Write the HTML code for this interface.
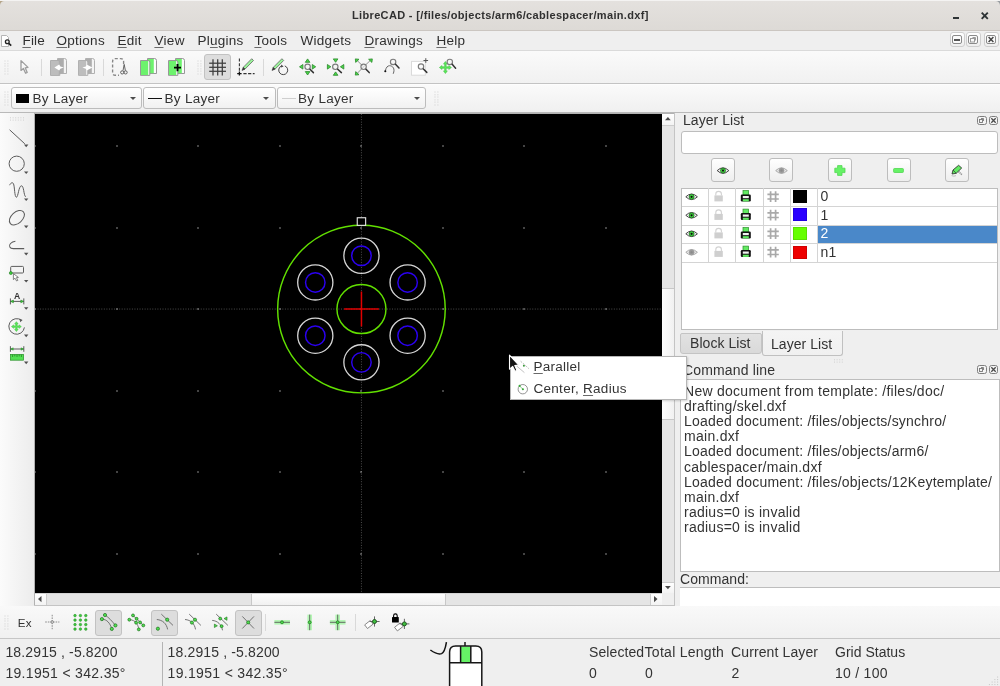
<!DOCTYPE html><html><head><meta charset="utf-8"><title>LibreCAD</title>
<style>
*{margin:0;padding:0;box-sizing:border-box}
html,body{width:1000px;height:686px;overflow:hidden;background:#efefef;font-family:"Liberation Sans",sans-serif;color:#232323;font-size:14.6px}
#root{position:absolute;left:0;top:0;width:1000px;height:686px;overflow:hidden;will-change:transform;background:#efefef}
.a{position:absolute}
.t{position:absolute;white-space:nowrap;line-height:1;font-size:14.6px;color:#333}
.m{font-size:14.1px;color:#2f2f2f}
.c{font-size:14.1px}
u{text-decoration:underline;text-underline-offset:2px;text-decoration-thickness:1px;text-decoration-color:#6a6a6a}
svg{position:absolute;overflow:visible}
#title{left:0;top:0;width:1000px;height:31px;background:linear-gradient(#e4e1de,#dddad6);border-top:1px solid #f4f3f2;border-bottom:1px solid #cbc6c1}
#menubar{left:0;top:31px;width:1000px;height:19px;background:#efefef}
#tb1{left:0;top:50px;width:1000px;height:34px;background:linear-gradient(#fafafa,#f1f1f1);border-top:1px solid #dadada;border-bottom:1px solid #c3c3c3}
#tb2{left:0;top:84px;width:1000px;height:29px;background:linear-gradient(#fafafa,#f0f0f0);border-top:1px solid #fdfdfd;border-bottom:1px solid #b9b9b9}
#ltb{left:0;top:113px;width:34px;height:493px;background:linear-gradient(90deg,#fbfbfb,#ececec)}
#canvas{left:35px;top:114px;width:626.5px;height:479px;background:#000;overflow:hidden}
.hd{position:absolute;background-image:radial-gradient(circle,#bdbdbd 0.55px,transparent 0.85px);background-size:2px 2px}
.combo{position:absolute;top:87px;height:22px;border:1px solid #bcbcbc;border-radius:3px;background:linear-gradient(#ffffff,#f1f1f1)}
.sep{position:absolute;width:1px;background:#d9d9d9}
.pressed{position:absolute;background:#dddddd;border:1px solid #c2c2c2;border-radius:3px}
.btn{position:absolute;border:1px solid #bdbdbd;border-radius:3px;background:linear-gradient(#ffffff,#eeeeee)}
</style></head><body>
<div id="root">
<div id="title" class="a"><span class="t" style="left:352px;top:9.2px;font-weight:bold;font-size:11px;letter-spacing:.34px;color:#303030" id="ttl">LibreCAD - [/files/objects/arm6/cablespacer/main.dxf]</span><div class="a" style="left:952.8px;top:16px;width:6.4px;height:2.2px;background:#2e3436"></div><svg style="left:981px;top:11px" width="8" height="8"><path d="M0.7 0.7 L6.8 6.8 M6.8 0.7 L0.7 6.8" stroke="#2e3436" stroke-width="1.9" fill="none"></path></svg><svg style="left:0;top:0" width="1000" height="6"><path d="M0 0 H4.5 A4.5 4.5 0 0 0 0 4.5 Z" fill="#b5a58a"></path><path d="M1000 0 H995.5 A4.5 4.5 0 0 1 1000 4.5 Z" fill="#9a9ea2"></path></svg></div>
<div id="menubar" class="a"><svg style="left:0.2px;top:4px" width="13" height="13"><path d="M1.5 0.5 H6.5 L8.5 2.5 V11.5 H1.5 Z" fill="#fff" stroke="#b5b5b5" stroke-width="1"></path><circle cx="7.3" cy="6.8" r="1.9" fill="#eee" stroke="#222" stroke-width="1.3"></circle><path d="M8.8 8.3 L11.2 10.6" stroke="#222" stroke-width="1.7"></path></svg><span class="t m" id="m_File" style="left: 22.4px; top: 3px; font-size: 13.52px; letter-spacing: 0.23px;"><u>F</u>ile</span><span class="t m" id="m_Options" style="left: 56.4px; top: 3px; font-size: 13.52px; letter-spacing: 0.283px;"><u>O</u>ptions</span><span class="t m" id="m_Edit" style="left: 117.4px; top: 3px; font-size: 13.52px; letter-spacing: 0.25px;"><u>E</u>dit</span><span class="t m" id="m_View" style="left: 154.4px; top: 3px; font-size: 13.52px; letter-spacing: 0.313px;"><u>V</u>iew</span><span class="t m" id="m_Plugins" style="left: 197.4px; top: 3px; font-size: 13.52px; letter-spacing: 0.27px;">Pl<u>u</u>gins</span><span class="t m" id="m_Tools" style="left: 254.4px; top: 3px; font-size: 13.52px; letter-spacing: 0.269px;"><u>T</u>ools</span><span class="t m" id="m_Widgets" style="left: 300.4px; top: 3px; font-size: 13.52px; letter-spacing: 0.299px;"><u></u>Widgets</span><span class="t m" id="m_Drawings" style="left: 364.4px; top: 3px; font-size: 13.52px; letter-spacing: 0.303px;"><u>D</u>rawings</span><span class="t m" id="m_Help" style="left: 436.4px; top: 3px; font-size: 13.52px; letter-spacing: 0.297px;"><u>H</u>elp</span><div class="btn" style="left:949.5px;top:1px;width:15px;height:15px;border-color:#cfcfcf"></div><div class="a" style="left:952px;top:4px;width:10px;height:9px;border:1px solid #8a8a8a;border-radius:2px;background:#fbfbfb"></div><div class="btn" style="left:965.5px;top:1px;width:15px;height:15px;border-color:#cfcfcf"></div><div class="a" style="left:968px;top:4px;width:10px;height:9px;border:1px solid #8a8a8a;border-radius:2px;background:#fbfbfb"></div><div class="btn" style="left:983.5px;top:1px;width:15px;height:15px;border-color:#cfcfcf"></div><div class="a" style="left:986px;top:4px;width:10px;height:9px;border:1px solid #8a8a8a;border-radius:2px;background:#fbfbfb"></div><div class="a" style="left:954px;top:8px;width:6px;height:2px;background:#555"></div><svg style="left:968px;top:4px" width="10" height="9"><rect x="2.5" y="3.5" width="4" height="3.5" fill="none" stroke="#9a9a9a"></rect><path d="M4.5 2.5 H7.5 V5.5" fill="none" stroke="#9a9a9a"></path></svg><svg style="left:986px;top:4px" width="10" height="9"><path d="M2.6 2 L7.4 7 M7.4 2 L2.6 7" stroke="#444" stroke-width="1.5"></path></svg></div>
<div id="tb1" class="a"></div>
<div id="tb2" class="a"></div>
<svg style="left:4px;top:60px" width="4" height="14"><rect x="0.5" y="0.5" width="1" height="1" fill="#cfcfcf"></rect><rect x="3.4" y="0.5" width="1" height="1" fill="#cfcfcf"></rect><rect x="0.5" y="3.3" width="1" height="1" fill="#cfcfcf"></rect><rect x="3.4" y="3.3" width="1" height="1" fill="#cfcfcf"></rect><rect x="0.5" y="5.5" width="1" height="1" fill="#cfcfcf"></rect><rect x="3.4" y="5.5" width="1" height="1" fill="#cfcfcf"></rect><rect x="0.5" y="8.4" width="1" height="1" fill="#cfcfcf"></rect><rect x="3.4" y="8.4" width="1" height="1" fill="#cfcfcf"></rect><rect x="0.5" y="10.6" width="1" height="1" fill="#cfcfcf"></rect><rect x="3.4" y="10.6" width="1" height="1" fill="#cfcfcf"></rect><rect x="0.5" y="13.5" width="1" height="1" fill="#cfcfcf"></rect><rect x="3.4" y="13.5" width="1" height="1" fill="#cfcfcf"></rect></svg><svg style="left:197px;top:60px" width="4" height="14"><rect x="0.5" y="0.5" width="1" height="1" fill="#cfcfcf"></rect><rect x="3.4" y="0.5" width="1" height="1" fill="#cfcfcf"></rect><rect x="0.5" y="3.3" width="1" height="1" fill="#cfcfcf"></rect><rect x="3.4" y="3.3" width="1" height="1" fill="#cfcfcf"></rect><rect x="0.5" y="5.5" width="1" height="1" fill="#cfcfcf"></rect><rect x="3.4" y="5.5" width="1" height="1" fill="#cfcfcf"></rect><rect x="0.5" y="8.4" width="1" height="1" fill="#cfcfcf"></rect><rect x="3.4" y="8.4" width="1" height="1" fill="#cfcfcf"></rect><rect x="0.5" y="10.6" width="1" height="1" fill="#cfcfcf"></rect><rect x="3.4" y="10.6" width="1" height="1" fill="#cfcfcf"></rect><rect x="0.5" y="13.5" width="1" height="1" fill="#cfcfcf"></rect><rect x="3.4" y="13.5" width="1" height="1" fill="#cfcfcf"></rect></svg><svg style="left:4px;top:91px" width="4" height="14"><rect x="0.5" y="0.5" width="1" height="1" fill="#cfcfcf"></rect><rect x="3.4" y="0.5" width="1" height="1" fill="#cfcfcf"></rect><rect x="0.5" y="3.3" width="1" height="1" fill="#cfcfcf"></rect><rect x="3.4" y="3.3" width="1" height="1" fill="#cfcfcf"></rect><rect x="0.5" y="5.5" width="1" height="1" fill="#cfcfcf"></rect><rect x="3.4" y="5.5" width="1" height="1" fill="#cfcfcf"></rect><rect x="0.5" y="8.4" width="1" height="1" fill="#cfcfcf"></rect><rect x="3.4" y="8.4" width="1" height="1" fill="#cfcfcf"></rect><rect x="0.5" y="10.6" width="1" height="1" fill="#cfcfcf"></rect><rect x="3.4" y="10.6" width="1" height="1" fill="#cfcfcf"></rect><rect x="0.5" y="13.5" width="1" height="1" fill="#cfcfcf"></rect><rect x="3.4" y="13.5" width="1" height="1" fill="#cfcfcf"></rect></svg><svg style="left:434px;top:91px" width="4" height="14"><rect x="0.5" y="0.5" width="1" height="1" fill="#cfcfcf"></rect><rect x="3.4" y="0.5" width="1" height="1" fill="#cfcfcf"></rect><rect x="0.5" y="3.3" width="1" height="1" fill="#cfcfcf"></rect><rect x="3.4" y="3.3" width="1" height="1" fill="#cfcfcf"></rect><rect x="0.5" y="5.5" width="1" height="1" fill="#cfcfcf"></rect><rect x="3.4" y="5.5" width="1" height="1" fill="#cfcfcf"></rect><rect x="0.5" y="8.4" width="1" height="1" fill="#cfcfcf"></rect><rect x="3.4" y="8.4" width="1" height="1" fill="#cfcfcf"></rect><rect x="0.5" y="10.6" width="1" height="1" fill="#cfcfcf"></rect><rect x="3.4" y="10.6" width="1" height="1" fill="#cfcfcf"></rect><rect x="0.5" y="13.5" width="1" height="1" fill="#cfcfcf"></rect><rect x="3.4" y="13.5" width="1" height="1" fill="#cfcfcf"></rect></svg><div class="sep" style="left:41px;top:59px;height:17px"></div><div class="sep" style="left:103px;top:59px;height:17px"></div><div class="sep" style="left:263px;top:59px;height:17px"></div><div class="pressed" style="left:204px;top:54px;width:27px;height:26px"></div><svg style="left:0;top:0" width="1000" height="120"><path d="M21 60.6 V70.4 L23.4 68.4 L25.6 73.2 L27.2 72.4 L25.2 67.8 L28 67.4 Z" fill="#f8f8f8" stroke="#9d9d9d" stroke-width="1.3" stroke-linejoin="round"></path><path d="M57.5 58.5 H64.5 Q66.5 58.5 66.5 60.5 V73.5 H57.5 Z" fill="#f4f4f4" stroke="#a9a9a9" stroke-width=".9"></path><rect x="58" y="59" width="5.8" height="14.2" fill="#adadad"></rect><path d="M50.5 60.5 H58 Q59.8 60.5 59.8 62 V75.4 H50.5 Z" fill="#b9b9b9" stroke="#a9a9a9" stroke-width=".9"></path><rect x="51" y="61" width="7.2" height="14" fill="#bdbdbd"></rect><path d="M54.4 67.6 L57.6 65.6 L59.2 64.6 L60.4 66.4 L63.8 67.6 L60.4 68.8 L59.2 70.6 L57.6 69.6 Z" fill="#fff"></path><path d="M85.5 58.5 H92.5 Q94.5 58.5 94.5 60.5 V73.5 H85.5 Z" fill="#f4f4f4" stroke="#a9a9a9" stroke-width=".9"></path><rect x="86" y="59" width="5.8" height="14.2" fill="#adadad"></rect><path d="M78.5 60.5 H86 Q87.8 60.5 87.8 62 V75.4 H78.5 Z" fill="#f4f4f4" stroke="#a9a9a9" stroke-width=".9"></path><rect x="79" y="61" width="7.2" height="14" fill="#bdbdbd"></rect><path d="M82.4 67.6 L85.8 66.4 L87 64.8 L88.6 65.6 L92.4 67.6 L88.6 69.6 L87 70.4 L85.8 68.8 Z" fill="#fff"></path><path d="M123.6 64 V61.5 Q123.6 58.6 120.8 58.6 H115.2 Q112.6 58.6 112.6 61.5 V72.6 Q112.6 75.2 115.2 75.2 H119" fill="none" stroke="#868686" stroke-width="1.35" stroke-dasharray="3 2"></path><path d="M124.2 64.4 L123 70.6 M124.2 64.4 L125.4 70.6" stroke="#555" stroke-width=".9"></path><circle cx="122.2" cy="72.4" r="1.6" fill="none" stroke="#555" stroke-width=".9"></circle><circle cx="125.6" cy="72.4" r="1.6" fill="none" stroke="#555" stroke-width=".9"></circle><path d="M147.5 58.5 H154.5 Q156.5 58.5 156.5 60.5 V73.5 H147.5 Z" fill="#fbfbfb" stroke="#8c8c8c" stroke-width=".9"></path><rect x="148" y="59" width="5.8" height="14.2" fill="#6df26d"></rect><path d="M140.5 60.5 H148 Q149.8 60.5 149.8 62 V75.4 H140.5 Z" fill="#fbfbfb" stroke="#8c8c8c" stroke-width=".9"></path><rect x="141" y="61" width="7.2" height="14" fill="#6df26d"></rect><path d="M175.5 58.5 H182.5 Q184.5 58.5 184.5 60.5 V73.5 H175.5 Z" fill="#fbfbfb" stroke="#8c8c8c" stroke-width=".9"></path><rect x="176" y="59" width="5.8" height="14.2" fill="#6df26d"></rect><path d="M168.5 60.5 H176 Q177.8 60.5 177.8 62 V75.4 H168.5 Z" fill="#fbfbfb" stroke="#8c8c8c" stroke-width=".9"></path><rect x="169" y="61" width="7.2" height="14" fill="#6df26d"></rect><path d="M174 67.6 H181 M177.5 64 V71.2" stroke="#000" stroke-width="1.9"></path><path d="M213 59.2 V75.6" stroke="#3e3e3e" stroke-width="1.25"></path><path d="M217.7 59.2 V75.6" stroke="#3e3e3e" stroke-width="1.25"></path><path d="M222.3 59.2 V75.6" stroke="#3e3e3e" stroke-width="1.25"></path><path d="M209.2 63.2 H226" stroke="#3e3e3e" stroke-width="1.25"></path><path d="M209.2 67.3 H226" stroke="#3e3e3e" stroke-width="1.25"></path><path d="M209.2 71.3 H226" stroke="#3e3e3e" stroke-width="1.25"></path><path d="M239.4 58.6 V71" stroke="#333" stroke-width="1.1" stroke-dasharray="3 1.6"></path><path d="M243.4 73.6 H254.6" stroke="#333" stroke-width="1.1" stroke-dasharray="3.2 1.5"></path><path d="M237.2 73.6 H241.6 M239.4 71.6 V75.6" stroke="#111" stroke-width="1.3"></path><path d="M244.994 69.1345 L253.492 60.4756 L251.708 58.7244 L243.209 67.3834 Z" fill="#9af59a" stroke="#5c5c5c" stroke-width=".75" stroke-linejoin="round"></path><path d="M242 70.4 L244.994 69.1345 L243.209 67.3834 Z" fill="#333" stroke="#333" stroke-width=".6"></path><path d="M275.005 69.1626 L283.684 60.4839 L281.916 58.7161 L273.237 67.3948 Z" fill="#9af59a" stroke="#5c5c5c" stroke-width=".75" stroke-linejoin="round"></path><path d="M272 70.4 L275.005 69.1626 L273.237 67.3948 Z" fill="#333" stroke="#333" stroke-width=".6"></path><path d="M281.4 66 A4.5 4.5 0 1 0 284.8 65.9" fill="none" stroke="#444" stroke-width="1"></path><path d="M281.2 64.4 L281 67.4 L283.6 66.4 Z" fill="#444"></path><polygon points="307.6,58.9 305.3,62.3 309.9,62.3" fill="#48d848" stroke="#2b862b" stroke-width=".8" stroke-linejoin="round"></polygon><polygon points="307.6,75 305.3,71.6 309.9,71.6" fill="#48d848" stroke="#2b862b" stroke-width=".8" stroke-linejoin="round"></polygon><polygon points="299.5,66.8 302.9,64.5 302.9,69.1" fill="#48d848" stroke="#2b862b" stroke-width=".8" stroke-linejoin="round"></polygon><polygon points="315.7,66.8 312.3,64.5 312.3,69.1" fill="#48d848" stroke="#2b862b" stroke-width=".8" stroke-linejoin="round"></polygon><circle cx="307.6" cy="66.8" r="2.7" fill="#f6f6f6" fill-opacity=".6" stroke="#7c7c7c" stroke-width="1.15"></circle><path d="M310.009 69.2092 L313.4 72.6" stroke="#333" stroke-width="1.5" stroke-linecap="round"></path><polygon points="335.6,62.3 333.3,58.9 337.9,58.9" fill="#48d848" stroke="#2b862b" stroke-width=".8" stroke-linejoin="round"></polygon><polygon points="335.6,71.9 333.3,75.3 337.9,75.3" fill="#48d848" stroke="#2b862b" stroke-width=".8" stroke-linejoin="round"></polygon><polygon points="330.8,66.8 327.4,64.5 327.4,69.1" fill="#48d848" stroke="#2b862b" stroke-width=".8" stroke-linejoin="round"></polygon><polygon points="340.4,66.8 343.8,64.5 343.8,69.1" fill="#48d848" stroke="#2b862b" stroke-width=".8" stroke-linejoin="round"></polygon><circle cx="335.3" cy="66.8" r="2.7" fill="#f6f6f6" fill-opacity=".6" stroke="#7c7c7c" stroke-width="1.15"></circle><path d="M337.709 69.2092 L341.4 72.6" stroke="#333" stroke-width="1.5" stroke-linecap="round"></path><path d="M357 60.4 L363.6 66.8 L370.4 60.4 M357 73.6 L363.6 66.8" stroke="#777" stroke-width=".8" fill="none"></path><polygon points="355.3,58.9 359,59.3 355.7,62.4" fill="#48d848" stroke="#2b862b" stroke-width=".8" stroke-linejoin="round"></polygon><polygon points="372.3,58.9 368.6,59.3 371.9,62.4" fill="#48d848" stroke="#2b862b" stroke-width=".8" stroke-linejoin="round"></polygon><polygon points="355.3,75.1 359,74.7 355.7,71.6" fill="#48d848" stroke="#2b862b" stroke-width=".8" stroke-linejoin="round"></polygon><circle cx="363.6" cy="66.8" r="2.7" fill="#f6f6f6" fill-opacity=".6" stroke="#7c7c7c" stroke-width="1.15"></circle><path d="M366.009 69.2092 L369.2 72.6" stroke="#333" stroke-width="1.5" stroke-linecap="round"></path><path d="M385.4 70.8 C386 67.4 387.6 65.7 389.6 65.7 C392.6 65.7 395.4 68.6 393.2 73.8" fill="none" stroke="#666" stroke-width="1"></path><circle cx="385.3" cy="71.2" r="1.05" fill="#111"></circle><circle cx="393.1" cy="61.9" r="2.7" fill="#f6f6f6" fill-opacity=".6" stroke="#7c7c7c" stroke-width="1.15"></circle><path d="M395.509 64.3092 L399 67.9" stroke="#333" stroke-width="1.5" stroke-linecap="round"></path><rect x="411.5" y="61.4" width="13.8" height="13.8" fill="#fff" stroke="#dadada" stroke-width="1"></rect><circle cx="421" cy="66.6" r="2.7" fill="#f6f6f6" fill-opacity=".6" stroke="#7c7c7c" stroke-width="1.15"></circle><path d="M423.409 69.0092 L426.8 72.4" stroke="#333" stroke-width="1.5" stroke-linecap="round"></path><path d="M423.5 60.5 H428.1 M425.8 58.2 V62.8" stroke="#555" stroke-width="1"></path><polygon points="445.40,61.50 447.30,64.10 446.15,64.10 446.15,66.75 448.80,66.75 448.80,65.60 451.40,67.50 448.80,69.40 448.80,68.25 446.15,68.25 446.15,70.90 447.30,70.90 445.40,73.50 443.50,70.90 444.65,70.90 444.65,68.25 442.00,68.25 442.00,69.40 439.40,67.50 442.00,65.60 442.00,66.75 444.65,66.75 444.65,64.10 443.50,64.10" fill="#5aea5a" stroke="#44c244" stroke-width=".6" stroke-linejoin="round"></polygon><circle cx="449.8" cy="61.9" r="2.7" fill="#f6f6f6" fill-opacity=".6" stroke="#7c7c7c" stroke-width="1.15"></circle><path d="M452.209 64.3092 L455.6 68.2" stroke="#333" stroke-width="1.5" stroke-linecap="round"></path></svg>
<div class="combo" style="left:11px;width:131px"></div><div class="combo" style="left:143px;width:133px"></div><div class="combo" style="left:277px;width:149px"></div><div class="a" style="left:16.2px;top:93.7px;width:13.2px;height:9.2px;background:#000"></div><div class="a" style="left:148px;top:97.5px;width:14px;height:1.2px;background:#111"></div><div class="a" style="left:282px;top:97.5px;width:14px;height:1px;background:#cfcfcf"></div><span class="t c" id="c1" style="left: 32.5px; top: 92px; font-size: 13.52px; letter-spacing: 0.285px;">By Layer</span><span class="t c" id="c2" style="left: 164.5px; top: 92px; font-size: 13.52px; letter-spacing: 0.285px;">By Layer</span><span class="t c" id="c3" style="left: 298px; top: 92px; font-size: 13.52px; letter-spacing: 0.285px;">By Layer</span><svg style="left:129.6px;top:96.7px" width="6" height="4"><path d="M0 0 H6 L3 3.1 Z" fill="#4c4c4c"></path></svg><svg style="left:263.4px;top:96.7px" width="6" height="4"><path d="M0 0 H6 L3 3.1 Z" fill="#4c4c4c"></path></svg><svg style="left:413.6px;top:96.7px" width="6" height="4"><path d="M0 0 H6 L3 3.1 Z" fill="#4c4c4c"></path></svg>
<div id="ltb" class="a"></div><svg style="left:10px;top:117px" width="15" height="4"><rect x="0" y="0.3" width="1" height="1" fill="#cfcfcf"></rect><rect x="0" y="2.6" width="1" height="1" fill="#cfcfcf"></rect><rect x="2.6" y="0.3" width="1" height="1" fill="#cfcfcf"></rect><rect x="2.6" y="2.6" width="1" height="1" fill="#cfcfcf"></rect><rect x="5.2" y="0.3" width="1" height="1" fill="#cfcfcf"></rect><rect x="5.2" y="2.6" width="1" height="1" fill="#cfcfcf"></rect><rect x="7.8" y="0.3" width="1" height="1" fill="#cfcfcf"></rect><rect x="7.8" y="2.6" width="1" height="1" fill="#cfcfcf"></rect><rect x="10.4" y="0.3" width="1" height="1" fill="#cfcfcf"></rect><rect x="10.4" y="2.6" width="1" height="1" fill="#cfcfcf"></rect><rect x="13" y="0.3" width="1" height="1" fill="#cfcfcf"></rect><rect x="13" y="2.6" width="1" height="1" fill="#cfcfcf"></rect></svg><svg style="left:0;top:0" width="40" height="400"><path d="M9.6 129.8 L24.8 143.8" stroke="#5c5c5c" stroke-width="1"></path><path d="M24 144.6 H28.4 L26.2 147.2 Z" fill="#505050"></path><circle cx="16.7" cy="163.7" r="7.6" fill="none" stroke="#5c5c5c" stroke-width="1"></circle><path d="M24 171.4 H28.4 L26.2 174 Z" fill="#505050"></path><path d="M9.6 185.2 C10.6 183 12.4 181.8 13.4 183.6 C14.8 186.4 14.4 197 16.4 197.2 C18.2 197.4 18.6 186 21.4 185.8 C24 185.8 23.6 195 25.6 196.8" fill="none" stroke="#5c5c5c" stroke-width="1"></path><path d="M24 198.4 H28.4 L26.2 201 Z" fill="#505050"></path><ellipse cx="16.9" cy="217.7" rx="8.8" ry="5.6" transform="rotate(-42 16.9 217.7)" fill="none" stroke="#5c5c5c" stroke-width="1"></ellipse><path d="M24 225.6 H28.4 L26.2 228.2 Z" fill="#505050"></path><path d="M15.4 241.2 C11 241.6 8.6 245 9.8 247 C10.4 248.2 11.6 248.6 13.4 248.6 H24.2" fill="none" stroke="#5c5c5c" stroke-width="1.05"></path><path d="M24 252.8 H28.4 L26.2 255.4 Z" fill="#505050"></path><rect x="10.7" y="266.4" width="12.8" height="6.6" rx="1" fill="#f4f4f4" stroke="#5c5c5c" stroke-width="1"></rect><circle cx="10.8" cy="273" r="1.5" fill="#3ecf3e" stroke="#1e7a1e" stroke-width=".6"></circle><path d="M13.4 273.6 V279.6 L15 278.2 L16.6 281 L17.8 280.4 L16.4 277.6 L18.4 277.4 Z" fill="#fff" stroke="#666" stroke-width=".8" stroke-linejoin="round"></path><path d="M24 280 H28.4 L26.2 282.6 Z" fill="#505050"></path><path d="M10.4 298.4 V304.4 M23.8 298.4 V304.4 M10.4 301.4 H23.8" stroke="#5c5c5c" stroke-width="1"></path><path d="M10.6 301.4 L13.4 300 V302.8 Z M23.6 301.4 L20.8 300 V302.8 Z" fill="#3ecf3e" stroke="#1e7a1e" stroke-width=".5"></path><text x="17.1" y="298.6" font-family="Liberation Sans" font-weight="bold" font-size="8.6" text-anchor="middle" fill="#333">A</text><path d="M24 307.2 H28.4 L26.2 309.8 Z" fill="#505050"></path><path d="M21.6 320.4 A7.8 7.8 0 1 0 24.4 327.4" fill="none" stroke="#5c5c5c" stroke-width="1"></path><path d="M19.4 318.6 L22.6 320 L20.2 322.2 Z" fill="#5c5c5c"></path><polygon points="16.40,321.70 18.10,323.90 17.10,323.90 17.10,325.90 19.10,325.90 19.10,324.90 21.30,326.60 19.10,328.30 19.10,327.30 17.10,327.30 17.10,329.30 18.10,329.30 16.40,331.50 14.70,329.30 15.70,329.30 15.70,327.30 13.70,327.30 13.70,328.30 11.50,326.60 13.70,324.90 13.70,325.90 15.70,325.90 15.70,323.90 14.70,323.90" fill="#5aea5a" stroke="#44c244" stroke-width=".6" stroke-linejoin="round"></polygon><path d="M24 334.6 H28.4 L26.2 337.2 Z" fill="#505050"></path><path d="M10.4 346.2 V351.8 M23.8 346.2 V351.8 M10.4 349 H23.8" stroke="#5c5c5c" stroke-width="1"></path><path d="M10.6 349 L13.2 347.8 V350.2 Z M23.6 349 L21 347.8 V350.2 Z" fill="#3ecf3e" stroke="#1e7a1e" stroke-width=".4"></path><rect x="10.4" y="354.4" width="13.2" height="5.8" fill="#52e052" stroke="#2a8f2a" stroke-width=".7"></rect><path d="M12.6 354.6 V357 M14.8 354.6 V356.4 M17 354.6 V357 M19.2 354.6 V356.4 M21.4 354.6 V357" stroke="#1e7a1e" stroke-width=".7"></path><path d="M24 361.6 H28.4 L26.2 364.2 Z" fill="#505050"></path></svg>
<div id="canvas" class="a"><svg style="left:0;top:0" width="627" height="479"><path d="M0 195.05 H627" stroke="#4c4c4c" stroke-width="1" stroke-dasharray="1 1.55"></path><path d="M326.45 0 V479" stroke="#4c4c4c" stroke-width="1" stroke-dasharray="1 1.55"></path><rect x="-0.6" y="31.4" width="1.2" height="1.2" fill="#bcbcbc"></rect><rect x="-0.6" y="113.4" width="1.2" height="1.2" fill="#bcbcbc"></rect><rect x="-0.6" y="194.4" width="1.2" height="1.2" fill="#c8c8c8"></rect><rect x="-0.6" y="276.4" width="1.2" height="1.2" fill="#bcbcbc"></rect><rect x="-0.6" y="357.4" width="1.2" height="1.2" fill="#bcbcbc"></rect><rect x="-0.6" y="439.4" width="1.2" height="1.2" fill="#bcbcbc"></rect><rect x="81.4" y="31.4" width="1.2" height="1.2" fill="#bcbcbc"></rect><rect x="81.4" y="113.4" width="1.2" height="1.2" fill="#bcbcbc"></rect><rect x="81.4" y="194.4" width="1.2" height="1.2" fill="#c8c8c8"></rect><rect x="81.4" y="276.4" width="1.2" height="1.2" fill="#bcbcbc"></rect><rect x="81.4" y="357.4" width="1.2" height="1.2" fill="#bcbcbc"></rect><rect x="81.4" y="439.4" width="1.2" height="1.2" fill="#bcbcbc"></rect><rect x="162.4" y="31.4" width="1.2" height="1.2" fill="#bcbcbc"></rect><rect x="162.4" y="113.4" width="1.2" height="1.2" fill="#bcbcbc"></rect><rect x="162.4" y="194.4" width="1.2" height="1.2" fill="#c8c8c8"></rect><rect x="162.4" y="276.4" width="1.2" height="1.2" fill="#bcbcbc"></rect><rect x="162.4" y="357.4" width="1.2" height="1.2" fill="#bcbcbc"></rect><rect x="162.4" y="439.4" width="1.2" height="1.2" fill="#bcbcbc"></rect><rect x="244.4" y="31.4" width="1.2" height="1.2" fill="#bcbcbc"></rect><rect x="244.4" y="113.4" width="1.2" height="1.2" fill="#bcbcbc"></rect><rect x="244.4" y="194.4" width="1.2" height="1.2" fill="#c8c8c8"></rect><rect x="244.4" y="276.4" width="1.2" height="1.2" fill="#bcbcbc"></rect><rect x="244.4" y="357.4" width="1.2" height="1.2" fill="#bcbcbc"></rect><rect x="244.4" y="439.4" width="1.2" height="1.2" fill="#bcbcbc"></rect><rect x="325.4" y="31.4" width="1.2" height="1.2" fill="#c8c8c8"></rect><rect x="325.4" y="113.4" width="1.2" height="1.2" fill="#c8c8c8"></rect><rect x="325.4" y="194.4" width="1.2" height="1.2" fill="#c8c8c8"></rect><rect x="325.4" y="276.4" width="1.2" height="1.2" fill="#c8c8c8"></rect><rect x="325.4" y="357.4" width="1.2" height="1.2" fill="#c8c8c8"></rect><rect x="325.4" y="439.4" width="1.2" height="1.2" fill="#c8c8c8"></rect><rect x="407.4" y="31.4" width="1.2" height="1.2" fill="#bcbcbc"></rect><rect x="407.4" y="113.4" width="1.2" height="1.2" fill="#bcbcbc"></rect><rect x="407.4" y="194.4" width="1.2" height="1.2" fill="#c8c8c8"></rect><rect x="407.4" y="276.4" width="1.2" height="1.2" fill="#bcbcbc"></rect><rect x="407.4" y="357.4" width="1.2" height="1.2" fill="#bcbcbc"></rect><rect x="407.4" y="439.4" width="1.2" height="1.2" fill="#bcbcbc"></rect><rect x="488.4" y="31.4" width="1.2" height="1.2" fill="#bcbcbc"></rect><rect x="488.4" y="113.4" width="1.2" height="1.2" fill="#bcbcbc"></rect><rect x="488.4" y="194.4" width="1.2" height="1.2" fill="#c8c8c8"></rect><rect x="488.4" y="276.4" width="1.2" height="1.2" fill="#bcbcbc"></rect><rect x="488.4" y="357.4" width="1.2" height="1.2" fill="#bcbcbc"></rect><rect x="488.4" y="439.4" width="1.2" height="1.2" fill="#bcbcbc"></rect><rect x="570.4" y="31.4" width="1.2" height="1.2" fill="#bcbcbc"></rect><rect x="570.4" y="113.4" width="1.2" height="1.2" fill="#bcbcbc"></rect><rect x="570.4" y="194.4" width="1.2" height="1.2" fill="#c8c8c8"></rect><rect x="570.4" y="276.4" width="1.2" height="1.2" fill="#bcbcbc"></rect><rect x="570.4" y="357.4" width="1.2" height="1.2" fill="#bcbcbc"></rect><rect x="570.4" y="439.4" width="1.2" height="1.2" fill="#bcbcbc"></rect><circle cx="326.45" cy="195.05" r="83.8" fill="none" stroke="#62e000" stroke-width="1.45"></circle><circle cx="326.45" cy="195.05" r="24.5" fill="none" stroke="#62e000" stroke-width="1.45"></circle><circle cx="326.45" cy="141.75" r="17.6" fill="none" stroke="#d6d6d6" stroke-width="1.3"></circle><circle cx="326.45" cy="141.75" r="9.75" fill="none" stroke="#2b00f0" stroke-width="1.45"></circle><circle cx="280.29" cy="168.40" r="17.6" fill="none" stroke="#d6d6d6" stroke-width="1.3"></circle><circle cx="280.29" cy="168.40" r="9.75" fill="none" stroke="#2b00f0" stroke-width="1.45"></circle><circle cx="280.29" cy="221.70" r="17.6" fill="none" stroke="#d6d6d6" stroke-width="1.3"></circle><circle cx="280.29" cy="221.70" r="9.75" fill="none" stroke="#2b00f0" stroke-width="1.45"></circle><circle cx="326.45" cy="248.35" r="17.6" fill="none" stroke="#d6d6d6" stroke-width="1.3"></circle><circle cx="326.45" cy="248.35" r="9.75" fill="none" stroke="#2b00f0" stroke-width="1.45"></circle><circle cx="372.61" cy="221.70" r="17.6" fill="none" stroke="#d6d6d6" stroke-width="1.3"></circle><circle cx="372.61" cy="221.70" r="9.75" fill="none" stroke="#2b00f0" stroke-width="1.45"></circle><circle cx="372.61" cy="168.40" r="17.6" fill="none" stroke="#d6d6d6" stroke-width="1.3"></circle><circle cx="372.61" cy="168.40" r="9.75" fill="none" stroke="#2b00f0" stroke-width="1.45"></circle><path d="M309.15 195.05 H343.95 M326.45 177.55 V212.55" stroke="#e00000" stroke-width="1.5"></path><rect x="322.25" y="103.75" width="8.4" height="7.6" fill="#000" stroke="#e8e8e8" stroke-width="1.1"></rect></svg></div>
<div class="a" style="left:34px;top:113px;width:641px;height:1px;background:#b2b2b2"></div><div class="a" style="left:34px;top:113px;width:1px;height:493px;background:#b2b2b2"></div><div class="a" style="left:662px;top:114px;width:13px;height:479px;background:#e5e5e5;border-right:1px solid #c4c4c4"></div><div class="a" style="left:662px;top:114px;width:12px;height:12px;background:linear-gradient(#ffffff,#f3f3f3);border-bottom:1px solid #cdcdcd"></div><div class="a" style="left:662px;top:582px;width:12px;height:11px;background:linear-gradient(#ffffff,#f3f3f3);border-top:1px solid #cdcdcd"></div><svg style="left:664.8px;top:117px" width="6" height="4"><path d="M0 3.2 H5.8 L2.9 0 Z" fill="#4a4a4a"></path></svg><svg style="left:664.8px;top:586px" width="6" height="4"><path d="M0 0 H5.8 L2.9 3.2 Z" fill="#4a4a4a"></path></svg><div class="a" style="left:662px;top:288px;width:12px;height:132px;background:linear-gradient(90deg,#fdfdfd,#f1f1f1);border-top:1px solid #c8c8c8;border-bottom:1px solid #c8c8c8"></div><div class="a" style="left:35px;top:593px;width:627px;height:13px;background:#e5e5e5;border-top:1px solid #d4d4d4;border-bottom:1px solid #c4c4c4"></div><div class="a" style="left:35px;top:594px;width:12px;height:11px;background:linear-gradient(#ffffff,#f3f3f3);border-right:1px solid #cdcdcd"></div><div class="a" style="left:650px;top:594px;width:12px;height:11px;background:linear-gradient(#ffffff,#f3f3f3);border-left:1px solid #cdcdcd"></div><svg style="left:38.3px;top:596.3px" width="4" height="7"><path d="M3.5 0 V6.2 L0 3.1 Z" fill="#4a4a4a"></path></svg><svg style="left:654.4px;top:596.3px" width="4" height="7"><path d="M0 0 V6.2 L3.5 3.1 Z" fill="#4a4a4a"></path></svg><div class="a" style="left:251px;top:594px;width:195px;height:11px;background:linear-gradient(#fdfdfd,#f1f1f1);border-left:1px solid #c8c8c8;border-right:1px solid #c8c8c8"></div><div class="a" style="left:662px;top:593px;width:12px;height:12px;background:#efefef"></div><div class="a" style="left:674px;top:113px;width:1px;height:493px;background:#c4c4c4"></div><div class="a" style="left:34px;top:605px;width:641px;height:1px;background:#c4c4c4"></div>
<span class="t" id="ll" style="left: 683px; top: 112.8px; letter-spacing: 0.058px; font-size: 14px;">Layer List</span><div class="a" style="left:977.2px;top:116px;width:9.4px;height:9.4px;border:1px solid #7e7e7e;border-radius:2.5px;background:#f4f4f4"></div><div class="a" style="left:989px;top:116px;width:9.4px;height:9.4px;border:1px solid #7e7e7e;border-radius:2.5px;background:#f4f4f4"></div><svg style="left:977.4px;top:116px" width="9" height="9"><rect x="2.5" y="3.5" width="3" height="3" fill="none" stroke="#777" stroke-width=".9"></rect><path d="M4 2.5 H6.5 V5" fill="none" stroke="#777" stroke-width=".9"></path></svg><svg style="left:989px;top:116px" width="9" height="9"><path d="M2.3 2.3 L6.7 6.7 M6.7 2.3 L2.3 6.7" stroke="#4a4a4a" stroke-width="1.3"></path></svg><div class="a" style="left:681px;top:131px;width:317px;height:23px;border:1px solid #bdbdbd;border-radius:3px;background:#fff"></div><div class="btn" style="left:711px;top:158.3px;width:24px;height:23.6px"></div><div class="btn" style="left:768.8px;top:158.3px;width:24px;height:23.6px"></div><div class="btn" style="left:828px;top:158.3px;width:24px;height:23.6px"></div><div class="btn" style="left:886.5px;top:158.3px;width:24px;height:23.6px"></div><div class="btn" style="left:945px;top:158.3px;width:24px;height:23.6px"></div><div class="a" style="left:681px;top:188px;width:317px;height:142px;border:1px solid #bdbdbd;background:#fff"></div><div class="a" style="left:682px;top:206px;width:315px;height:1px;background:#d4d4d4"></div><div class="a" style="left:793px;top:190px;width:14px;height:13px;background:#000000;border:1px solid rgba(0,0,0,.12)"></div><span class="t lt" style="left: 820.5px; top: 189px; font-size: 14px; letter-spacing: 0.328px;">0</span><div class="a" style="left:682px;top:225px;width:315px;height:1px;background:#d4d4d4"></div><div class="a" style="left:793px;top:208px;width:14px;height:13px;background:#2a00ff;border:1px solid rgba(0,0,0,.12)"></div><span class="t lt" style="left: 820.5px; top: 207.5px; font-size: 14px; letter-spacing: 0.328px;">1</span><div class="a" style="left:818px;top:226px;width:179px;height:17px;background:#4a88c9"></div><div class="a" style="left:682px;top:243px;width:315px;height:1px;background:#d4d4d4"></div><div class="a" style="left:793px;top:227px;width:14px;height:13px;background:#66ff00;border:1px solid rgba(0,0,0,.12)"></div><span class="t lt" style="left: 820.5px; top: 226px; color: rgb(255, 255, 255); font-size: 14px; letter-spacing: 0.328px;">2</span><div class="a" style="left:682px;top:262px;width:315px;height:1px;background:#d4d4d4"></div><div class="a" style="left:793px;top:246px;width:14px;height:13px;background:#ee0000;border:1px solid rgba(0,0,0,.12)"></div><span class="t lt" style="left: 820.5px; top: 244.5px; font-size: 14px; letter-spacing: 0.328px;">n1</span><div class="a" style="left:708px;top:188px;width:1px;height:74px;background:#d4d4d4"></div><div class="a" style="left:735px;top:188px;width:1px;height:74px;background:#d4d4d4"></div><div class="a" style="left:763px;top:188px;width:1px;height:74px;background:#d4d4d4"></div><div class="a" style="left:790px;top:188px;width:1px;height:74px;background:#d4d4d4"></div><div class="a" style="left:817px;top:188px;width:1px;height:74px;background:#d4d4d4"></div><svg style="left:0;top:0" width="1000" height="280"><path d="M717.2 170.6 Q723 165 728.8 170.6 Q723 176.2 717.2 170.6 Z" fill="#f2f2f2" stroke="#333" stroke-width=".9"></path><circle cx="723" cy="170.6" r="2.5" fill="#3fd83f" stroke="#165e16" stroke-width=".7"></circle><circle cx="723" cy="170.6" r="1.1" fill="#111"></circle><path d="M775.7 170.6 Q781.5 165 787.3 170.6 Q781.5 176.2 775.7 170.6 Z" fill="#e6e6e6" stroke="#a0a0a0" stroke-width=".9"></path><circle cx="781.5" cy="170.6" r="2.5" fill="#9a9a9a" stroke="#9a9a9a" stroke-width=".7"></circle><circle cx="781.5" cy="170.6" r="1.1" fill="#8a8a8a"></circle><path d="M837.6 165.6 H842 V168.2 H845 V172.6 H842 V175.4 H837.6 V172.6 H834.8 V168.2 H837.6 Z" fill="#66f266" stroke="#50d650" stroke-width=".8" stroke-linejoin="round"></path><rect x="893.6" y="168.5" width="9.8" height="4" rx=".8" fill="#66f266" stroke="#50d650" stroke-width=".8"></rect><path d="M957.4 170.4 L961.8 174.6" stroke="#8a8a8a" stroke-width="1.7" stroke-dasharray="1 .7"></path><path d="M952 174 L953 170 L958.6 165.3 L961.7 168 L956.2 173.3 Z" fill="#62ea62" stroke="#2e2e2e" stroke-width=".85" stroke-linejoin="round"></path><path d="M953 170 L956.2 173.3" stroke="#2e2e2e" stroke-width=".7"></path><path d="M951.6 175.6 Q954 176.8 956 175.6" fill="none" stroke="#999" stroke-width=".6"></path><path d="M685.8 196.8 Q691.6 191.2 697.4 196.8 Q691.6 202.4 685.8 196.8 Z" fill="#f2f2f2" stroke="#333" stroke-width=".9"></path><circle cx="691.6" cy="196.8" r="2.5" fill="#3fd83f" stroke="#165e16" stroke-width=".7"></circle><circle cx="691.6" cy="196.8" r="1.1" fill="#111"></circle><path d="M715.8 195.6 V194 Q715.8 191.4 718.6 191.4 Q721.4 191.4 721.4 194 V195.6" fill="none" stroke="#d2d2d2" stroke-width="1.1"></path><rect x="714.4" y="195.4" width="8.4" height="6" fill="#cfcfcf"></rect><rect x="743" y="190.6" width="5.6" height="4.4" fill="#62ea62" stroke="#2a8f2a" stroke-width=".7"></rect><rect x="740.8" y="194.6" width="10" height="6.8" rx="1.2" fill="#111"></rect><rect x="742.8" y="196" width="6" height="2.2" fill="#f2f2f2"></rect><rect x="742.8" y="199.2" width="6" height="2.2" fill="#62ea62"></rect><path d="M770.6 191.2 V202 M775.6 191.2 V202 M767.4 194.4 H778.8 M767.4 199 H778.8" stroke="#a9a9a9" stroke-width="1.7"></path><path d="M685.8 215.3 Q691.6 209.7 697.4 215.3 Q691.6 220.9 685.8 215.3 Z" fill="#f2f2f2" stroke="#333" stroke-width=".9"></path><circle cx="691.6" cy="215.3" r="2.5" fill="#3fd83f" stroke="#165e16" stroke-width=".7"></circle><circle cx="691.6" cy="215.3" r="1.1" fill="#111"></circle><path d="M715.8 214.1 V212.5 Q715.8 209.9 718.6 209.9 Q721.4 209.9 721.4 212.5 V214.1" fill="none" stroke="#d2d2d2" stroke-width="1.1"></path><rect x="714.4" y="213.9" width="8.4" height="6" fill="#cfcfcf"></rect><rect x="743" y="209.1" width="5.6" height="4.4" fill="#62ea62" stroke="#2a8f2a" stroke-width=".7"></rect><rect x="740.8" y="213.1" width="10" height="6.8" rx="1.2" fill="#111"></rect><rect x="742.8" y="214.5" width="6" height="2.2" fill="#f2f2f2"></rect><rect x="742.8" y="217.7" width="6" height="2.2" fill="#62ea62"></rect><path d="M770.6 209.7 V220.5 M775.6 209.7 V220.5 M767.4 212.9 H778.8 M767.4 217.5 H778.8" stroke="#a9a9a9" stroke-width="1.7"></path><path d="M685.8 233.8 Q691.6 228.2 697.4 233.8 Q691.6 239.4 685.8 233.8 Z" fill="#f2f2f2" stroke="#333" stroke-width=".9"></path><circle cx="691.6" cy="233.8" r="2.5" fill="#3fd83f" stroke="#165e16" stroke-width=".7"></circle><circle cx="691.6" cy="233.8" r="1.1" fill="#111"></circle><path d="M715.8 232.6 V231 Q715.8 228.4 718.6 228.4 Q721.4 228.4 721.4 231 V232.6" fill="none" stroke="#d2d2d2" stroke-width="1.1"></path><rect x="714.4" y="232.4" width="8.4" height="6" fill="#cfcfcf"></rect><rect x="743" y="227.6" width="5.6" height="4.4" fill="#62ea62" stroke="#2a8f2a" stroke-width=".7"></rect><rect x="740.8" y="231.6" width="10" height="6.8" rx="1.2" fill="#111"></rect><rect x="742.8" y="233" width="6" height="2.2" fill="#f2f2f2"></rect><rect x="742.8" y="236.2" width="6" height="2.2" fill="#62ea62"></rect><path d="M770.6 228.2 V239 M775.6 228.2 V239 M767.4 231.4 H778.8 M767.4 236 H778.8" stroke="#a9a9a9" stroke-width="1.7"></path><path d="M685.8 252.3 Q691.6 246.7 697.4 252.3 Q691.6 257.9 685.8 252.3 Z" fill="#e6e6e6" stroke="#a0a0a0" stroke-width=".9"></path><circle cx="691.6" cy="252.3" r="2.5" fill="#9a9a9a" stroke="#9a9a9a" stroke-width=".7"></circle><circle cx="691.6" cy="252.3" r="1.1" fill="#8a8a8a"></circle><path d="M715.8 251.1 V249.5 Q715.8 246.9 718.6 246.9 Q721.4 246.9 721.4 249.5 V251.1" fill="none" stroke="#d2d2d2" stroke-width="1.1"></path><rect x="714.4" y="250.9" width="8.4" height="6" fill="#cfcfcf"></rect><rect x="743" y="246.1" width="5.6" height="4.4" fill="#62ea62" stroke="#2a8f2a" stroke-width=".7"></rect><rect x="740.8" y="250.1" width="10" height="6.8" rx="1.2" fill="#111"></rect><rect x="742.8" y="251.5" width="6" height="2.2" fill="#f2f2f2"></rect><rect x="742.8" y="254.7" width="6" height="2.2" fill="#62ea62"></rect><path d="M770.6 246.7 V257.5 M775.6 246.7 V257.5 M767.4 249.9 H778.8 M767.4 254.5 H778.8" stroke="#a9a9a9" stroke-width="1.7"></path></svg>
<div class="a" style="left:680px;top:332.5px;width:82px;height:21.5px;border:1px solid #c4c4c4;border-radius:2px 2px 3px 3px;background:linear-gradient(#e2e2e2,#d9d9d9)"></div><div class="a" style="left:761.5px;top:330.5px;width:81px;height:25px;border:1px solid #c0c0c0;border-top:none;border-radius:0 0 3px 3px;background:linear-gradient(#f4f4f4,#f0f0f0)"></div><span class="t" id="tab1" style="left: 690px; top: 335.7px; letter-spacing: 0.053px; font-size: 14px;">Block List</span><span class="t" id="tab2" style="left: 771px; top: 336.7px; letter-spacing: 0.058px; font-size: 14px;">Layer List</span><svg style="left:834px;top:359px" width="10" height="2"><rect x="0" y="0.3" width="1" height="1" fill="#cfcfcf"></rect><rect x="0" y="2.6" width="1" height="1" fill="#cfcfcf"></rect><rect x="2.6" y="0.3" width="1" height="1" fill="#cfcfcf"></rect><rect x="2.6" y="2.6" width="1" height="1" fill="#cfcfcf"></rect><rect x="5.2" y="0.3" width="1" height="1" fill="#cfcfcf"></rect><rect x="5.2" y="2.6" width="1" height="1" fill="#cfcfcf"></rect><rect x="7.8" y="0.3" width="1" height="1" fill="#cfcfcf"></rect><rect x="7.8" y="2.6" width="1" height="1" fill="#cfcfcf"></rect></svg><span class="t" id="cl" style="left: 683px; top: 362.5px; letter-spacing: 0.15px; font-size: 14px;">Command line</span><div class="a" style="left:977.2px;top:365px;width:9.4px;height:9.4px;border:1px solid #7e7e7e;border-radius:2.5px;background:#f4f4f4"></div><div class="a" style="left:989px;top:365px;width:9.4px;height:9.4px;border:1px solid #7e7e7e;border-radius:2.5px;background:#f4f4f4"></div><svg style="left:977.4px;top:365px" width="9" height="9"><rect x="2.5" y="3.5" width="3" height="3" fill="none" stroke="#777" stroke-width=".9"></rect><path d="M4 2.5 H6.5 V5" fill="none" stroke="#777" stroke-width=".9"></path></svg><svg style="left:989px;top:365px" width="9" height="9"><path d="M2.3 2.3 L6.7 6.7 M6.7 2.3 L2.3 6.7" stroke="#4a4a4a" stroke-width="1.3"></path></svg><div class="a" style="left:680px;top:379px;width:320px;height:193px;border:1px solid #bdbdbd;background:#fff"></div><span class="t cm" id="cm0" style="left: 684px; top: 383.5px; font-size: 14px; letter-spacing: 0.272px;">New document from template: /files/doc/</span><span class="t cm" id="cm1" style="left: 684px; top: 398.72px; font-size: 14px; letter-spacing: 0.244px;">drafting/skel.dxf</span><span class="t cm" id="cm2" style="left: 684px; top: 413.94px; letter-spacing: 0.214px; font-size: 14px;">Loaded document: /files/objects/synchro/</span><span class="t cm" id="cm3" style="left: 684px; top: 429.16px; font-size: 14px; letter-spacing: 0.279px;">main.dxf</span><span class="t cm" id="cm4" style="left: 684px; top: 444.38px; letter-spacing: 0.216px; font-size: 14px;">Loaded document: /files/objects/arm6/</span><span class="t cm" id="cm5" style="left: 684px; top: 459.6px; font-size: 14px; letter-spacing: 0.28px;">cablespacer/main.dxf</span><span class="t cm" id="cm6" style="left: 684px; top: 474.82px; letter-spacing: 0.22px; font-size: 14px;">Loaded document: /files/objects/12Keytemplate/</span><span class="t cm" id="cm7" style="left: 684px; top: 490.04px; font-size: 14px; letter-spacing: 0.279px;">main.dxf</span><span class="t cm" id="cm8" style="left: 684px; top: 505.26px; font-size: 14px; letter-spacing: 0.25px;">radius=0 is invalid</span><span class="t cm" id="cm9" style="left: 684px; top: 520.48px; font-size: 14px; letter-spacing: 0.25px;">radius=0 is invalid</span><span class="t" id="cmd" style="left: 680px; top: 571.6px; letter-spacing: 0.064px; font-size: 14px;">Command:</span><div class="a" style="left:680px;top:587px;width:320px;height:19px;background:#fff;border-top:1px solid #bdbdbd"></div>
<div class="a" style="left:510px;top:356px;width:177px;height:44px;background:#fff;border:1px solid #b6b6b6;box-shadow:1px 1px 2px rgba(0,0,0,.18)"></div><span class="t" id="pm1" style="left: 533.5px; top: 360.4px; font-size: 13.52px; letter-spacing: 0.242px;"><u>P</u>arallel</span><span class="t" id="pm2" style="left: 533.5px; top: 382.3px; font-size: 13.52px; letter-spacing: 0.273px;">Center, <u>R</u>adius</span><svg style="left:0;top:0" width="700" height="410"><path d="M520.6 361.2 L528.8 368.6" stroke="#9a9a9a" stroke-width=".7" stroke-dasharray="2 1.2"></path><path d="M516.4 365.8 L524.4 372.6" stroke="#a8a8a8" stroke-width=".7"></path><circle cx="523.9" cy="365.8" r="1" fill="#3a9a3a"></circle><circle cx="522.8" cy="389.2" r="4.7" fill="none" stroke="#7a7a7a" stroke-width=".8"></circle><circle cx="522.9" cy="389.3" r="1.05" fill="#3aa83a"></circle><circle cx="519.6" cy="385.9" r="1.05" fill="#3aa83a"></circle><path d="M519.6 385.9 L522.9 389.3" stroke="#3aa83a" stroke-width=".6"></path><path d="M509.5 355.2 V369.2 L512.7 366.4 L515 371.3 L517 370.4 L514.8 365.6 L518.6 365 Z" fill="#141414" stroke="#fff" stroke-width="1.1" stroke-linejoin="round"></path></svg>
<div class="a" style="left:0;top:606px;width:1000px;height:33px;background:linear-gradient(#f9f9f9,#f0f0f0);border-bottom:1px solid #c6c6c6"></div><svg style="left:4px;top:615px" width="4" height="14"><rect x="0.5" y="0.5" width="1" height="1" fill="#cfcfcf"></rect><rect x="3.4" y="0.5" width="1" height="1" fill="#cfcfcf"></rect><rect x="0.5" y="3.3" width="1" height="1" fill="#cfcfcf"></rect><rect x="3.4" y="3.3" width="1" height="1" fill="#cfcfcf"></rect><rect x="0.5" y="5.5" width="1" height="1" fill="#cfcfcf"></rect><rect x="3.4" y="5.5" width="1" height="1" fill="#cfcfcf"></rect><rect x="0.5" y="8.4" width="1" height="1" fill="#cfcfcf"></rect><rect x="3.4" y="8.4" width="1" height="1" fill="#cfcfcf"></rect><rect x="0.5" y="10.6" width="1" height="1" fill="#cfcfcf"></rect><rect x="3.4" y="10.6" width="1" height="1" fill="#cfcfcf"></rect><rect x="0.5" y="13.5" width="1" height="1" fill="#cfcfcf"></rect><rect x="3.4" y="13.5" width="1" height="1" fill="#cfcfcf"></rect></svg><div class="pressed" style="left:95px;top:610px;width:26.6px;height:25.6px"></div><div class="pressed" style="left:151px;top:610px;width:26.6px;height:25.6px"></div><div class="pressed" style="left:235px;top:610px;width:26.6px;height:25.6px"></div><div class="sep" style="left:265px;top:614px;height:17px"></div><div class="sep" style="left:355px;top:614px;height:17px"></div><span class="t" id="ex" style="left: 17.8px; top: 616.9px; font-size: 11.6px; letter-spacing: 0.297px;">Ex</span><svg style="left:0;top:0" width="1000" height="640"><path d="M45.2 622 H59.4 M52.2 614.8 V629.2" stroke="#8a8a8a" stroke-width="1" stroke-dasharray="1.6 1"></path><circle cx="52.2" cy="622" r="1.4" fill="none" stroke="#8a8a8a" stroke-width=".7"></circle><circle cx="75" cy="615.6" r="1.3" fill="#3cc83c" stroke="#2b8f2b" stroke-width=".5"></circle><circle cx="75" cy="620.1" r="1.3" fill="#3cc83c" stroke="#2b8f2b" stroke-width=".5"></circle><circle cx="75" cy="624.6" r="1.3" fill="#3cc83c" stroke="#2b8f2b" stroke-width=".5"></circle><circle cx="75" cy="629.1" r="1.3" fill="#3cc83c" stroke="#2b8f2b" stroke-width=".5"></circle><circle cx="80.4" cy="615.6" r="1.3" fill="#3cc83c" stroke="#2b8f2b" stroke-width=".5"></circle><circle cx="80.4" cy="620.1" r="1.3" fill="#3cc83c" stroke="#2b8f2b" stroke-width=".5"></circle><circle cx="80.4" cy="624.6" r="1.3" fill="#3cc83c" stroke="#2b8f2b" stroke-width=".5"></circle><circle cx="80.4" cy="629.1" r="1.3" fill="#3cc83c" stroke="#2b8f2b" stroke-width=".5"></circle><circle cx="85.8" cy="615.6" r="1.3" fill="#3cc83c" stroke="#2b8f2b" stroke-width=".5"></circle><circle cx="85.8" cy="620.1" r="1.3" fill="#3cc83c" stroke="#2b8f2b" stroke-width=".5"></circle><circle cx="85.8" cy="624.6" r="1.3" fill="#3cc83c" stroke="#2b8f2b" stroke-width=".5"></circle><circle cx="85.8" cy="629.1" r="1.3" fill="#3cc83c" stroke="#2b8f2b" stroke-width=".5"></circle><path d="M105 615 C108.6 617.4 112 621 115.4 625.4 M101.9 619.1 C107 619.4 110 623 111.8 628.9" fill="none" stroke="#666" stroke-width=".9"></path><circle cx="105" cy="615" r="1.6" fill="#4fe04f" stroke="#1d6f1d" stroke-width=".7"></circle><circle cx="115.4" cy="625.4" r="1.6" fill="#4fe04f" stroke="#1d6f1d" stroke-width=".7"></circle><circle cx="101.9" cy="619.1" r="1.6" fill="#4fe04f" stroke="#1d6f1d" stroke-width=".7"></circle><circle cx="111.8" cy="628.9" r="1.6" fill="#4fe04f" stroke="#1d6f1d" stroke-width=".7"></circle><path d="M133 615.4 L143.3 625.4 M129.3 619.7 C133 619.8 135 621.4 136.1 622.7 C137.8 624.6 138.4 627 138.8 629.4" fill="none" stroke="#666" stroke-width=".85"></path><circle cx="133" cy="615.4" r="1.45" fill="#4fe04f" stroke="#1d6f1d" stroke-width=".7"></circle><circle cx="129.3" cy="619.7" r="1.45" fill="#4fe04f" stroke="#1d6f1d" stroke-width=".7"></circle><circle cx="136.6" cy="618.8" r="1.45" fill="#4fe04f" stroke="#1d6f1d" stroke-width=".7"></circle><circle cx="136.1" cy="622.7" r="1.45" fill="#4fe04f" stroke="#1d6f1d" stroke-width=".7"></circle><circle cx="140.1" cy="622.4" r="1.45" fill="#4fe04f" stroke="#1d6f1d" stroke-width=".7"></circle><circle cx="143.3" cy="625.4" r="1.45" fill="#4fe04f" stroke="#1d6f1d" stroke-width=".7"></circle><circle cx="138.8" cy="629.4" r="1.45" fill="#4fe04f" stroke="#1d6f1d" stroke-width=".7"></circle><path d="M161.3 614.1 L173 625.4 M156.8 619.5 C162.6 620 166.6 623.6 167.6 629.4" fill="none" stroke="#666" stroke-width=".9"></path><circle cx="167.2" cy="619.7" r="1.6" fill="#4fe04f" stroke="#1d6f1d" stroke-width=".7"></circle><circle cx="157.9" cy="628.7" r="1.6" fill="#4fe04f" stroke="#1d6f1d" stroke-width=".7"></circle><path d="M189.2 614.1 L200.9 625.4 M185 619.5 C190.8 620 194.6 623.6 195.5 629.4" fill="none" stroke="#666" stroke-width=".9"></path><circle cx="195" cy="619.7" r="1.55" fill="#4fe04f" stroke="#1d6f1d" stroke-width=".7"></circle><circle cx="191.9" cy="622.6" r="1.55" fill="#4fe04f" stroke="#1d6f1d" stroke-width=".7"></circle><path d="M216.2 614.1 L227.9 625.4 M212.2 620.4 C217.6 620.8 221.6 624.6 222.5 630.3" fill="none" stroke="#666" stroke-width=".9"></path><circle cx="220.2" cy="618.6" r="1.45" fill="#4fe04f" stroke="#1d6f1d" stroke-width=".7"></circle><circle cx="221.6" cy="626.2" r="1.45" fill="#4fe04f" stroke="#1d6f1d" stroke-width=".7"></circle><path d="M224 618.6 l3 -1.7 v3.4 Z M217.4 625.8 l-3 -1.7 v3.4 Z" fill="#4fe04f" stroke="#1d6f1d" stroke-width=".6" stroke-linejoin="round"></path><path d="M242.3 616.4 L254 628.5 M254 616.4 L242.3 628.5" stroke="#666" stroke-width=".9"></path><circle cx="248.2" cy="622.4" r="1.55" fill="#4fe04f" stroke="#1d6f1d" stroke-width=".7"></circle><rect x="274.4" y="620" width="15.6" height="4.6" fill="#b4f6b4"></rect><path d="M274.4 622.3 H290" stroke="#5a5a5a" stroke-width=".9"></path><circle cx="282" cy="622.3" r="1.5" fill="#4fe04f" stroke="#1d6f1d" stroke-width=".7"></circle><rect x="307.4" y="614.6" width="4.6" height="15.6" fill="#b4f6b4"></rect><path d="M309.7 614.6 V630.2" stroke="#5a5a5a" stroke-width=".9"></path><circle cx="309.7" cy="622.3" r="1.5" fill="#4fe04f" stroke="#1d6f1d" stroke-width=".7"></circle><rect x="329.9" y="620" width="15.6" height="4.6" fill="#b4f6b4"></rect><rect x="335.4" y="614.6" width="4.6" height="15.6" fill="#b4f6b4"></rect><path d="M329.9 622.3 H345.5 M337.7 614.6 V630.2" stroke="#5a5a5a" stroke-width=".9"></path><circle cx="337.7" cy="622.3" r="1.5" fill="#4fe04f" stroke="#1d6f1d" stroke-width=".7"></circle><rect x="-3.6" y="-2.3" width="7.2" height="4.6" fill="#fff" stroke="#777" stroke-width=".8" transform="translate(368.9 624.5) rotate(-38)"></rect><path d="M369.6 621.5 H379.6 M374.5 616.4 V626.6" stroke="#444" stroke-width=".8"></path><circle cx="374.5" cy="621.5" r="2" fill="#3fbf3f" stroke="#1b4f1b" stroke-width=".9"></circle><rect x="392" y="617" width="6.8" height="5.6" rx=".6" fill="#000"></rect><path d="M393.6 617 V615.8 Q393.6 613.9 395.4 613.9 Q397.2 613.9 397.2 615.8 V617" fill="none" stroke="#000" stroke-width="1.1"></path><rect x="-3.6" y="-2.3" width="7.2" height="4.6" fill="#fff" stroke="#777" stroke-width=".8" transform="translate(398.8 626.9) rotate(-38)"></rect><path d="M399.5 623.9 H409.4 M404.4 618.8 V629" stroke="#444" stroke-width=".8"></path><circle cx="404.4" cy="623.9" r="2" fill="#3fbf3f" stroke="#1b4f1b" stroke-width=".9"></circle></svg>
<div class="a" style="left:162px;top:642px;width:1px;height:44px;background:#b4b4b4"></div><span class="t st" id="s1" style="left: 5.4px; top: 645.2px; letter-spacing: 0.143px; font-size: 14px;">18.2915 , -5.8200</span><span class="t st" id="s2" style="left: 5.4px; top: 666.3px; letter-spacing: 0.317px; font-size: 14px;">19.1951 &lt; 342.35°</span><span class="t st" id="s3" style="left: 167.6px; top: 645.2px; letter-spacing: 0.143px; font-size: 14px;">18.2915 , -5.8200</span><span class="t st" id="s4" style="left: 167.6px; top: 666.3px; letter-spacing: 0.317px; font-size: 14px;">19.1951 &lt; 342.35°</span><span class="t st" id="s5" style="left: 589px; top: 645.2px; letter-spacing: 0.09px; font-size: 14px;">Selected</span><span class="t st" id="s6" style="left: 644.6px; top: 645.2px; letter-spacing: 0.27px; font-size: 14px;">Total Length</span><span class="t st" id="s7" style="left: 731px; top: 645.2px; letter-spacing: 0.12px; font-size: 14px;">Current Layer</span><span class="t st" id="s8" style="left: 835px; top: 645.2px; letter-spacing: 0.01px; font-size: 14px;">Grid Status</span><span class="t st" id="s9" style="left: 589px; top: 666.3px; letter-spacing: 0.328px; font-size: 14px;">0</span><span class="t st" id="s10" style="left: 645px; top: 666.3px; letter-spacing: 0.328px; font-size: 14px;">0</span><span class="t st" id="s11" style="left: 731.5px; top: 666.3px; letter-spacing: 0.328px; font-size: 14px;">2</span><span class="t st" id="s12" style="left: 835px; top: 666.3px; letter-spacing: 0.268px; font-size: 14px;">10 / 100</span><svg style="left:0;top:0" width="1000" height="686"><path d="M449.6 686 V652 Q449.6 646 455.6 646 H475.8 Q481.8 646 481.8 652 V686 Z" fill="#fff"></path><rect x="461" y="646.6" width="9.4" height="15.6" fill="#66f266"></rect><path d="M449.6 686 V652 Q449.6 646 455.6 646 H475.8 Q481.8 646 481.8 652 V686 M449.6 662.8 H481.8 M460.6 646 V662.8 M470.8 646 V662.8 M465 642 V646" fill="none" stroke="#161616" stroke-width="1.5"></path><path d="M446.4 642.2 C445.6 647 445 652 441.6 653.6 C438 655 434 652.6 430.4 650" fill="none" stroke="#111" stroke-width="1.5"></path></svg>
<svg style="left:0;top:0" width="1000" height="686"><rect x="997" y="684" width="1.1" height="1.1" fill="#cdcdcd"></rect><rect x="994.3" y="684" width="1.1" height="1.1" fill="#cdcdcd"></rect><rect x="991.6" y="684" width="1.1" height="1.1" fill="#cdcdcd"></rect><rect x="988.9" y="684" width="1.1" height="1.1" fill="#cdcdcd"></rect><rect x="997" y="681.5" width="1.1" height="1.1" fill="#cdcdcd"></rect><rect x="994.3" y="681.5" width="1.1" height="1.1" fill="#cdcdcd"></rect><rect x="991.6" y="681.5" width="1.1" height="1.1" fill="#cdcdcd"></rect><rect x="997" y="679" width="1.1" height="1.1" fill="#cdcdcd"></rect><rect x="994.3" y="679" width="1.1" height="1.1" fill="#cdcdcd"></rect><rect x="997" y="676.5" width="1.1" height="1.1" fill="#cdcdcd"></rect></svg></div>

</body></html>
